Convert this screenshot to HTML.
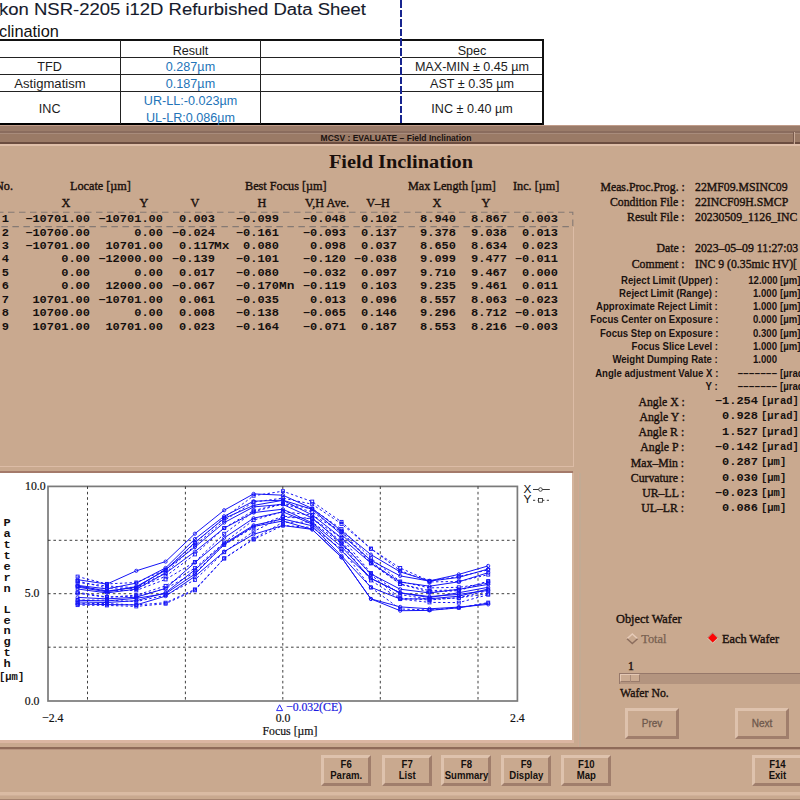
<!DOCTYPE html>
<html><head><meta charset="utf-8"><title>Field Inclination</title><style>
html,body{margin:0;padding:0;}
body{width:800px;height:800px;overflow:hidden;background:#c9a98f;position:relative;font-family:"Liberation Sans",sans-serif;}
#root{position:absolute;left:0;top:0;width:800px;height:800px;overflow:hidden;}
.r{position:absolute;}
.t{position:absolute;white-space:nowrap;margin:0;padding:0;}
.doc{font-family:"Liberation Sans",sans-serif;}
.sb{font-family:"Liberation Sans",sans-serif;font-weight:bold;}
.ss{font-family:"Liberation Sans",sans-serif;}
.sf{font-family:"Liberation Serif",serif;}
.sfb{font-family:"Liberation Serif",serif;font-weight:bold;}
.mb{font-family:"Liberation Mono",monospace;font-weight:bold;}
.btn{position:absolute;box-sizing:border-box;background:#c9a98f;border:3px solid;border-color:#dec2ad #a07e6c #a07e6c #dec2ad;display:flex;align-items:center;justify-content:center;}
.bi{font-family:"Liberation Sans",sans-serif;text-align:center;white-space:nowrap;}
</style></head><body><div id="root">
<div class="r" style="left:0px;top:0px;width:800px;height:125px;background:#fff;"></div>
<div class="t doc" style="top:-1.90px;height:22px;line-height:22px;left:-1.00px;transform:scaleX(1.07);transform-origin:left center;font-size:17.3px;color:#161a2c;-webkit-text-stroke:0.12px #161a2c;">kon NSR-2205 i12D Refurbished Data Sheet</div>
<div class="t doc" style="top:21.20px;height:20px;line-height:20px;left:-0.80px;transform:scaleX(0.95);transform-origin:left center;font-size:17.2px;color:#111;">clination</div>
<div class="r" style="left:0px;top:7px;width:0.8px;height:8.5px;background:#b08860;"></div>
<div class="r" style="left:0px;top:39px;width:543.5px;height:2px;background:#111;"></div>
<div class="r" style="left:0px;top:57px;width:543px;height:1.2px;background:#222;"></div>
<div class="r" style="left:0px;top:73.8px;width:543px;height:1.2px;background:#222;"></div>
<div class="r" style="left:0px;top:90.8px;width:543px;height:1.2px;background:#222;"></div>
<div class="r" style="left:0px;top:122.8px;width:543.5px;height:2px;background:#000;"></div>
<div class="r" style="left:119.5px;top:40px;width:1.3px;height:84px;background:#222;"></div>
<div class="r" style="left:259.5px;top:40px;width:1.3px;height:84px;background:#222;"></div>
<div class="r" style="left:541.7px;top:39px;width:2px;height:85.8px;background:#111;"></div>
<div class="r" style="left:400.3px;top:0;width:2px;height:123px;background:repeating-linear-gradient(to bottom,#17248f 0,#17248f 7.6px,#fff 7.6px,#fff 9.6px);"></div>
<div class="t doc" style="top:59.20px;height:16px;line-height:16px;left:-150.50px;width:400px;text-align:center;font-size:12.6px;color:#1c1c1c;">TFD</div>
<div class="t doc" style="top:76.10px;height:16px;line-height:16px;left:-150.40px;width:400px;text-align:center;transform:scaleX(1.04);transform-origin:center center;font-size:12.6px;color:#1c1c1c;">Astigmatism</div>
<div class="t doc" style="top:101.10px;height:16px;line-height:16px;left:-150.30px;width:400px;text-align:center;font-size:12.6px;color:#1c1c1c;">INC</div>
<div class="t doc" style="top:42.60px;height:16px;line-height:16px;left:-9.50px;width:400px;text-align:center;font-size:12.6px;color:#1c1c1c;">Result</div>
<div class="t doc" style="top:59.20px;height:16px;line-height:16px;left:-9.50px;width:400px;text-align:center;font-size:12.6px;color:#2374b8;">0.287µm</div>
<div class="t doc" style="top:76.10px;height:16px;line-height:16px;left:-9.50px;width:400px;text-align:center;font-size:12.6px;color:#2374b8;">0.187µm</div>
<div class="t doc" style="top:93.10px;height:16px;line-height:16px;left:-9.50px;width:400px;text-align:center;font-size:12.6px;color:#2374b8;">UR-LL:-0.023µm</div>
<div class="t doc" style="top:110.10px;height:16px;line-height:16px;left:-9.50px;width:400px;text-align:center;font-size:12.6px;color:#2374b8;">UL-LR:0.086µm</div>
<div class="t doc" style="top:42.60px;height:16px;line-height:16px;left:272.00px;width:400px;text-align:center;font-size:12.6px;color:#1c1c1c;">Spec</div>
<div class="t doc" style="top:59.20px;height:16px;line-height:16px;left:272.00px;width:400px;text-align:center;font-size:12.6px;color:#1c1c1c;">MAX-MIN ± 0.45 µm</div>
<div class="t doc" style="top:76.10px;height:16px;line-height:16px;left:272.00px;width:400px;text-align:center;font-size:12.6px;color:#1c1c1c;">AST ± 0.35 µm</div>
<div class="t doc" style="top:101.10px;height:16px;line-height:16px;left:272.00px;width:400px;text-align:center;font-size:12.6px;color:#1c1c1c;">INC ± 0.40 µm</div>
<div class="r" style="left:0px;top:125px;width:800px;height:675px;background:#c9a98f;"></div>
<div class="r" style="left:0px;top:125px;width:800px;height:1px;background:#c09c8a;"></div>
<div class="r" style="left:0px;top:126px;width:800px;height:5.5px;background:#9a7b69;"></div>
<div class="r" style="left:0px;top:131px;width:800px;height:2px;background:#8a6c5e;"></div>
<div class="r" style="left:0px;top:133px;width:800px;height:1px;background:#a88b7b;"></div>
<div class="r" style="left:0px;top:134px;width:800px;height:8px;background:#9a7a66;"></div>
<div class="r" style="left:0px;top:142px;width:800px;height:2px;background:#6b4d40;"></div>
<div class="r" style="left:0px;top:144px;width:800px;height:1.5px;background:#dfbfa9;"></div>
<div class="r" style="left:793.3px;top:132px;width:1px;height:11.5px;background:#7a5c4e;"></div>
<div class="r" style="left:794.3px;top:132px;width:1.2px;height:11.5px;background:#c9ab98;"></div>
<div class="t sb" style="top:131.60px;height:12px;line-height:12px;left:196.00px;width:400px;text-align:center;font-size:8.5px;color:#1a1210;">MCSV : EVALUATE – Field Inclination</div>
<div class="t sfb" style="top:150.50px;height:22px;line-height:22px;left:201.00px;width:400px;text-align:center;transform:scaleX(1.13);transform-origin:center center;font-size:18px;color:#1a100c;">Field Inclination</div>
<div class="t sf" style="top:177.90px;height:16px;line-height:16px;left:-4.60px;transform:scaleX(0.985);transform-origin:left center;font-size:12.4px;color:#1a100c;-webkit-text-stroke:0.38px #1a100c;">No.</div>
<div class="t sf" style="top:177.90px;height:16px;line-height:16px;left:70.00px;transform:scaleX(0.985);transform-origin:left center;font-size:12.4px;color:#1a100c;-webkit-text-stroke:0.38px #1a100c;">Locate [µm]</div>
<div class="t sf" style="top:177.90px;height:16px;line-height:16px;left:245.30px;transform:scaleX(0.985);transform-origin:left center;font-size:12.4px;color:#1a100c;-webkit-text-stroke:0.38px #1a100c;">Best Focus [µm]</div>
<div class="t sf" style="top:177.90px;height:16px;line-height:16px;left:408.20px;transform:scaleX(0.985);transform-origin:left center;font-size:12.4px;color:#1a100c;-webkit-text-stroke:0.38px #1a100c;">Max Length [µm]</div>
<div class="t sf" style="top:177.90px;height:16px;line-height:16px;left:512.50px;transform:scaleX(0.985);transform-origin:left center;font-size:12.4px;color:#1a100c;-webkit-text-stroke:0.38px #1a100c;">Inc. [µm]</div>
<div class="t sf" style="top:195.20px;height:16px;line-height:16px;left:-133.70px;width:400px;text-align:center;transform:scaleX(0.985);transform-origin:center center;font-size:12.4px;color:#1a100c;-webkit-text-stroke:0.38px #1a100c;">X</div>
<div class="t sf" style="top:195.20px;height:16px;line-height:16px;left:-56.50px;width:400px;text-align:center;transform:scaleX(0.985);transform-origin:center center;font-size:12.4px;color:#1a100c;-webkit-text-stroke:0.38px #1a100c;">Y</div>
<div class="t sf" style="top:195.20px;height:16px;line-height:16px;left:-5.50px;width:400px;text-align:center;transform:scaleX(0.985);transform-origin:center center;font-size:12.4px;color:#1a100c;-webkit-text-stroke:0.38px #1a100c;">V</div>
<div class="t sf" style="top:195.20px;height:16px;line-height:16px;left:61.50px;width:400px;text-align:center;transform:scaleX(0.985);transform-origin:center center;font-size:12.4px;color:#1a100c;-webkit-text-stroke:0.38px #1a100c;">H</div>
<div class="t sf" style="top:195.20px;height:16px;line-height:16px;left:126.50px;width:400px;text-align:center;transform:scaleX(0.985);transform-origin:center center;font-size:12.4px;color:#1a100c;-webkit-text-stroke:0.38px #1a100c;">V,H Ave.</div>
<div class="t sf" style="top:195.20px;height:16px;line-height:16px;left:177.50px;width:400px;text-align:center;transform:scaleX(0.985);transform-origin:center center;font-size:12.4px;color:#1a100c;-webkit-text-stroke:0.38px #1a100c;">V–H</div>
<div class="t sf" style="top:195.20px;height:16px;line-height:16px;left:236.50px;width:400px;text-align:center;transform:scaleX(0.985);transform-origin:center center;font-size:12.4px;color:#1a100c;-webkit-text-stroke:0.38px #1a100c;">X</div>
<div class="t sf" style="top:195.20px;height:16px;line-height:16px;left:286.30px;width:400px;text-align:center;transform:scaleX(0.985);transform-origin:center center;font-size:12.4px;color:#1a100c;-webkit-text-stroke:0.38px #1a100c;">Y</div>
<div class="t mb" style="right:791.10px;top:213.19px;line-height:13.42px;text-align:right;white-space:pre;transform:scaleX(1.2);transform-origin:right center;font-size:10px;color:#15100e;">1
2
3
4
5
6
7
8
9</div>
<div class="t mb" style="right:709.70px;top:213.19px;line-height:13.42px;text-align:right;white-space:pre;transform:scaleX(1.2);transform-origin:right center;font-size:10px;color:#15100e;">−10701.00
−10700.00
−10701.00
0.00
0.00
0.00
10701.00
10700.00
10701.00</div>
<div class="t mb" style="right:636.70px;top:213.19px;line-height:13.42px;text-align:right;white-space:pre;transform:scaleX(1.2);transform-origin:right center;font-size:10px;color:#15100e;">−10701.00
0.00
10701.00
−12000.00
0.00
12000.00
−10701.00
0.00
10701.00</div>
<div class="t mb" style="right:585.20px;top:213.19px;line-height:13.42px;text-align:right;white-space:pre;transform:scaleX(1.2);transform-origin:right center;font-size:10px;color:#15100e;">0.003
−0.024
0.117
−0.139
0.017
−0.067
0.061
0.008
0.023</div>
<div class="t mb" style="right:520.70px;top:213.19px;line-height:13.42px;text-align:right;white-space:pre;transform:scaleX(1.2);transform-origin:right center;font-size:10px;color:#15100e;">−0.099
−0.161
0.080
−0.101
−0.080
−0.170
−0.035
−0.138
−0.164</div>
<div class="t mb" style="right:454.20px;top:213.19px;line-height:13.42px;text-align:right;white-space:pre;transform:scaleX(1.2);transform-origin:right center;font-size:10px;color:#15100e;">−0.048
−0.093
0.098
−0.120
−0.032
−0.119
0.013
−0.065
−0.071</div>
<div class="t mb" style="right:403.20px;top:213.19px;line-height:13.42px;text-align:right;white-space:pre;transform:scaleX(1.2);transform-origin:right center;font-size:10px;color:#15100e;">0.102
0.137
0.037
−0.038
0.097
0.103
0.096
0.146
0.187</div>
<div class="t mb" style="right:344.20px;top:213.19px;line-height:13.42px;text-align:right;white-space:pre;transform:scaleX(1.2);transform-origin:right center;font-size:10px;color:#15100e;">8.940
9.378
8.650
9.099
9.710
9.235
8.557
9.296
8.553</div>
<div class="t mb" style="right:293.10px;top:213.19px;line-height:13.42px;text-align:right;white-space:pre;transform:scaleX(1.2);transform-origin:right center;font-size:10px;color:#15100e;">8.867
9.038
8.634
9.477
9.467
9.461
8.063
8.712
8.216</div>
<div class="t mb" style="right:241.70px;top:213.19px;line-height:13.42px;text-align:right;white-space:pre;transform:scaleX(1.2);transform-origin:right center;font-size:10px;color:#15100e;">0.003
0.013
0.023
−0.011
0.000
0.011
−0.023
−0.013
−0.003</div>
<div class="t mb" style="top:240.74px;height:12px;line-height:12px;left:214.30px;transform:scaleX(1.28);transform-origin:left center;font-size:10px;color:#15100e;">Mx</div>
<div class="t mb" style="top:281.00px;height:12px;line-height:12px;left:278.80px;transform:scaleX(1.28);transform-origin:left center;font-size:10px;color:#15100e;">Mn</div>
<svg class="r" style="left:0;top:208px;width:580px;height:24px" width="580" height="24"><path d="M-3 4.3H572.8V18.6H-3" fill="none" stroke="#857a74" stroke-width="1.1" stroke-dasharray="6.5 4.5"/></svg>
<div class="r" style="left:572.5px;top:227px;width:1.5px;height:240px;background:#dcbca6;"></div>
<div class="r" style="left:0px;top:465.5px;width:574px;height:1.5px;background:#dcbca6;"></div>
<div class="t sf" style="top:179.00px;height:16px;line-height:16px;right:115.50px;transform:scaleX(0.95);transform-origin:right center;font-size:12.4px;color:#1a100c;-webkit-text-stroke:0.38px #1a100c;">Meas.Proc.Prog. :</div>
<div class="t sf" style="top:179.00px;height:16px;line-height:16px;left:695.00px;transform:scaleX(0.95);transform-origin:left center;font-size:12.4px;color:#1a100c;-webkit-text-stroke:0.38px #1a100c;white-space:pre;">22MF09.MSINC09</div>
<div class="t sf" style="top:194.20px;height:16px;line-height:16px;right:115.50px;transform:scaleX(0.95);transform-origin:right center;font-size:12.4px;color:#1a100c;-webkit-text-stroke:0.38px #1a100c;">Condition File :</div>
<div class="t sf" style="top:194.20px;height:16px;line-height:16px;left:695.00px;transform:scaleX(0.95);transform-origin:left center;font-size:12.4px;color:#1a100c;-webkit-text-stroke:0.38px #1a100c;white-space:pre;">22INCF09H.SMCP</div>
<div class="t sf" style="top:209.40px;height:16px;line-height:16px;right:115.50px;transform:scaleX(0.95);transform-origin:right center;font-size:12.4px;color:#1a100c;-webkit-text-stroke:0.38px #1a100c;">Result File :</div>
<div class="t sf" style="top:209.40px;height:16px;line-height:16px;left:695.00px;transform:scaleX(0.95);transform-origin:left center;font-size:12.4px;color:#1a100c;-webkit-text-stroke:0.38px #1a100c;white-space:pre;">20230509_1126_INC</div>
<div class="t sf" style="top:240.30px;height:16px;line-height:16px;right:115.50px;transform:scaleX(0.95);transform-origin:right center;font-size:12.4px;color:#1a100c;-webkit-text-stroke:0.38px #1a100c;">Date :</div>
<div class="t sf" style="top:240.30px;height:16px;line-height:16px;left:695.00px;transform:scaleX(0.95);transform-origin:left center;font-size:12.4px;color:#1a100c;-webkit-text-stroke:0.38px #1a100c;white-space:pre;">2023–05–09 11:27:03</div>
<div class="t sf" style="top:255.50px;height:16px;line-height:16px;right:115.50px;transform:scaleX(0.95);transform-origin:right center;font-size:12.4px;color:#1a100c;-webkit-text-stroke:0.38px #1a100c;">Comment :</div>
<div class="t sf" style="top:255.50px;height:16px;line-height:16px;left:695.00px;transform:scaleX(0.95);transform-origin:left center;font-size:12.4px;color:#1a100c;-webkit-text-stroke:0.38px #1a100c;white-space:pre;">INC 9 (0.35mic HV)[</div>
<div class="t sb" style="top:273.50px;height:13px;line-height:13px;right:82.00px;transform:scaleX(0.96);transform-origin:right center;font-size:10px;color:#1a1210;">Reject Limit (Upper) :</div>
<div class="t sb" style="top:273.50px;height:13px;line-height:13px;right:22.80px;transform:scaleX(0.96);transform-origin:right center;font-size:10px;color:#1a1210;">12.000</div>
<div class="t sb" style="top:273.50px;height:13px;line-height:13px;left:780.30px;transform:scaleX(0.96);transform-origin:left center;font-size:10px;color:#1a1210;white-space:pre;">[µm]</div>
<div class="t sb" style="top:286.80px;height:13px;line-height:13px;right:82.00px;transform:scaleX(0.96);transform-origin:right center;font-size:10px;color:#1a1210;">Reject Limit (Range) :</div>
<div class="t sb" style="top:286.80px;height:13px;line-height:13px;right:22.80px;transform:scaleX(0.96);transform-origin:right center;font-size:10px;color:#1a1210;">1.000</div>
<div class="t sb" style="top:286.80px;height:13px;line-height:13px;left:780.30px;transform:scaleX(0.96);transform-origin:left center;font-size:10px;color:#1a1210;white-space:pre;">[µm]</div>
<div class="t sb" style="top:300.10px;height:13px;line-height:13px;right:82.00px;transform:scaleX(0.96);transform-origin:right center;font-size:10px;color:#1a1210;">Approximate Reject Limit :</div>
<div class="t sb" style="top:300.10px;height:13px;line-height:13px;right:22.80px;transform:scaleX(0.96);transform-origin:right center;font-size:10px;color:#1a1210;">1.000</div>
<div class="t sb" style="top:300.10px;height:13px;line-height:13px;left:780.30px;transform:scaleX(0.96);transform-origin:left center;font-size:10px;color:#1a1210;white-space:pre;">[µm]</div>
<div class="t sb" style="top:313.40px;height:13px;line-height:13px;right:82.00px;transform:scaleX(0.96);transform-origin:right center;font-size:10px;color:#1a1210;">Focus Center on Exposure :</div>
<div class="t sb" style="top:313.40px;height:13px;line-height:13px;right:22.80px;transform:scaleX(0.96);transform-origin:right center;font-size:10px;color:#1a1210;">0.000</div>
<div class="t sb" style="top:313.40px;height:13px;line-height:13px;left:780.30px;transform:scaleX(0.96);transform-origin:left center;font-size:10px;color:#1a1210;white-space:pre;">[µm]</div>
<div class="t sb" style="top:326.70px;height:13px;line-height:13px;right:82.00px;transform:scaleX(0.96);transform-origin:right center;font-size:10px;color:#1a1210;">Focus Step on Exposure :</div>
<div class="t sb" style="top:326.70px;height:13px;line-height:13px;right:22.80px;transform:scaleX(0.96);transform-origin:right center;font-size:10px;color:#1a1210;">0.300</div>
<div class="t sb" style="top:326.70px;height:13px;line-height:13px;left:780.30px;transform:scaleX(0.96);transform-origin:left center;font-size:10px;color:#1a1210;white-space:pre;">[µm]</div>
<div class="t sb" style="top:340.00px;height:13px;line-height:13px;right:82.00px;transform:scaleX(0.96);transform-origin:right center;font-size:10px;color:#1a1210;">Focus Slice Level :</div>
<div class="t sb" style="top:340.00px;height:13px;line-height:13px;right:22.80px;transform:scaleX(0.96);transform-origin:right center;font-size:10px;color:#1a1210;">1.000</div>
<div class="t sb" style="top:340.00px;height:13px;line-height:13px;left:780.30px;transform:scaleX(0.96);transform-origin:left center;font-size:10px;color:#1a1210;white-space:pre;">[µm]</div>
<div class="t sb" style="top:353.30px;height:13px;line-height:13px;right:82.00px;transform:scaleX(0.96);transform-origin:right center;font-size:10px;color:#1a1210;">Weight Dumping Rate :</div>
<div class="t sb" style="top:353.30px;height:13px;line-height:13px;right:22.80px;transform:scaleX(0.96);transform-origin:right center;font-size:10px;color:#1a1210;">1.000</div>
<div class="t sb" style="top:366.60px;height:13px;line-height:13px;right:82.00px;transform:scaleX(0.96);transform-origin:right center;font-size:10px;color:#1a1210;">Angle adjustment Value X :</div>
<div class="t sb" style="top:366.60px;height:13px;line-height:13px;right:22.80px;transform:scaleX(0.96);transform-origin:right center;font-size:10px;color:#1a1210;letter-spacing:0.08px;">−−−−−−−</div>
<div class="t sb" style="top:366.60px;height:13px;line-height:13px;left:780.30px;transform:scaleX(0.96);transform-origin:left center;font-size:10px;color:#1a1210;white-space:pre;">[µrad]</div>
<div class="t sb" style="top:379.90px;height:13px;line-height:13px;right:82.00px;transform:scaleX(0.96);transform-origin:right center;font-size:10px;color:#1a1210;">Y :</div>
<div class="t sb" style="top:379.90px;height:13px;line-height:13px;right:22.80px;transform:scaleX(0.96);transform-origin:right center;font-size:10px;color:#1a1210;letter-spacing:0.08px;">−−−−−−−</div>
<div class="t sb" style="top:379.90px;height:13px;line-height:13px;left:780.30px;transform:scaleX(0.96);transform-origin:left center;font-size:10px;color:#1a1210;white-space:pre;">[µrad]</div>
<div class="t sf" style="top:393.50px;height:16px;line-height:16px;right:115.50px;transform:scaleX(0.95);transform-origin:right center;font-size:12.4px;color:#1a100c;-webkit-text-stroke:0.38px #1a100c;">Angle X :</div>
<div class="t mb" style="top:394.20px;height:16px;line-height:16px;right:42.40px;transform:scaleX(1.2);transform-origin:right center;font-size:10px;color:#15100e;white-space:pre;">−1.254</div>
<div class="t mb" style="top:394.20px;height:16px;line-height:16px;left:761.30px;transform:scaleX(1.05);transform-origin:left center;font-size:10px;color:#15100e;white-space:pre;">[µrad]</div>
<div class="t sf" style="top:408.78px;height:16px;line-height:16px;right:115.50px;transform:scaleX(0.95);transform-origin:right center;font-size:12.4px;color:#1a100c;-webkit-text-stroke:0.38px #1a100c;">Angle Y :</div>
<div class="t mb" style="top:409.48px;height:16px;line-height:16px;right:42.40px;transform:scaleX(1.2);transform-origin:right center;font-size:10px;color:#15100e;white-space:pre;">0.928</div>
<div class="t mb" style="top:409.48px;height:16px;line-height:16px;left:761.30px;transform:scaleX(1.05);transform-origin:left center;font-size:10px;color:#15100e;white-space:pre;">[µrad]</div>
<div class="t sf" style="top:424.06px;height:16px;line-height:16px;right:115.50px;transform:scaleX(0.95);transform-origin:right center;font-size:12.4px;color:#1a100c;-webkit-text-stroke:0.38px #1a100c;">Angle R :</div>
<div class="t mb" style="top:424.76px;height:16px;line-height:16px;right:42.40px;transform:scaleX(1.2);transform-origin:right center;font-size:10px;color:#15100e;white-space:pre;">1.527</div>
<div class="t mb" style="top:424.76px;height:16px;line-height:16px;left:761.30px;transform:scaleX(1.05);transform-origin:left center;font-size:10px;color:#15100e;white-space:pre;">[µrad]</div>
<div class="t sf" style="top:439.34px;height:16px;line-height:16px;right:115.50px;transform:scaleX(0.95);transform-origin:right center;font-size:12.4px;color:#1a100c;-webkit-text-stroke:0.38px #1a100c;">Angle P :</div>
<div class="t mb" style="top:440.04px;height:16px;line-height:16px;right:42.40px;transform:scaleX(1.2);transform-origin:right center;font-size:10px;color:#15100e;white-space:pre;">−0.142</div>
<div class="t mb" style="top:440.04px;height:16px;line-height:16px;left:761.30px;transform:scaleX(1.05);transform-origin:left center;font-size:10px;color:#15100e;white-space:pre;">[µrad]</div>
<div class="t sf" style="top:454.62px;height:16px;line-height:16px;right:115.50px;transform:scaleX(0.95);transform-origin:right center;font-size:12.4px;color:#1a100c;-webkit-text-stroke:0.38px #1a100c;">Max–Min :</div>
<div class="t mb" style="top:455.32px;height:16px;line-height:16px;right:42.40px;transform:scaleX(1.2);transform-origin:right center;font-size:10px;color:#15100e;white-space:pre;">0.287</div>
<div class="t mb" style="top:455.32px;height:16px;line-height:16px;left:761.30px;transform:scaleX(1.05);transform-origin:left center;font-size:10px;color:#15100e;white-space:pre;">[µm]</div>
<div class="t sf" style="top:469.90px;height:16px;line-height:16px;right:115.50px;transform:scaleX(0.95);transform-origin:right center;font-size:12.4px;color:#1a100c;-webkit-text-stroke:0.38px #1a100c;">Curvature :</div>
<div class="t mb" style="top:470.60px;height:16px;line-height:16px;right:42.40px;transform:scaleX(1.2);transform-origin:right center;font-size:10px;color:#15100e;white-space:pre;">0.030</div>
<div class="t mb" style="top:470.60px;height:16px;line-height:16px;left:761.30px;transform:scaleX(1.05);transform-origin:left center;font-size:10px;color:#15100e;white-space:pre;">[µm]</div>
<div class="t sf" style="top:485.18px;height:16px;line-height:16px;right:115.50px;transform:scaleX(0.95);transform-origin:right center;font-size:12.4px;color:#1a100c;-webkit-text-stroke:0.38px #1a100c;">UR–LL :</div>
<div class="t mb" style="top:485.88px;height:16px;line-height:16px;right:42.40px;transform:scaleX(1.2);transform-origin:right center;font-size:10px;color:#15100e;white-space:pre;">−0.023</div>
<div class="t mb" style="top:485.88px;height:16px;line-height:16px;left:761.30px;transform:scaleX(1.05);transform-origin:left center;font-size:10px;color:#15100e;white-space:pre;">[µm]</div>
<div class="t sf" style="top:500.46px;height:16px;line-height:16px;right:115.50px;transform:scaleX(0.95);transform-origin:right center;font-size:12.4px;color:#1a100c;-webkit-text-stroke:0.38px #1a100c;">UL–LR :</div>
<div class="t mb" style="top:501.16px;height:16px;line-height:16px;right:42.40px;transform:scaleX(1.2);transform-origin:right center;font-size:10px;color:#15100e;white-space:pre;">0.086</div>
<div class="t mb" style="top:501.16px;height:16px;line-height:16px;left:761.30px;transform:scaleX(1.05);transform-origin:left center;font-size:10px;color:#15100e;white-space:pre;">[µm]</div>
<div class="r" style="left:0px;top:470.8px;width:573px;height:1.8px;background:#a47a6a;"></div>
<div class="r" style="left:0px;top:472.5px;width:572.3px;height:267.8px;background:#fff;"></div>
<div class="r" style="left:572.3px;top:472.5px;width:2px;height:268px;background:#d3b39c;"></div>
<div class="r" style="left:577.8px;top:472.5px;width:1.2px;height:274px;background:#cfa791;"></div>
<div class="r" style="left:579.2px;top:472.5px;width:1.5px;height:274px;background:#c2ab94;"></div>
<div class="r" style="left:0px;top:740.3px;width:573.5px;height:2.6px;background:#dbb6a2;"></div>
<svg class="r" style="left:0;top:0;width:800px;height:800px" width="800" height="800" viewBox="0 0 800 800"><rect x="48.0" y="486.4" width="469.4" height="214.60000000000002" fill="none" stroke="#7a7a7a" stroke-width="1.7"/><line x1="87.5" y1="486.4" x2="87.5" y2="701.0" stroke="#2a2a2a" stroke-width="0.9" stroke-dasharray="2.6 2.8"/><line x1="185.4" y1="486.4" x2="185.4" y2="701.0" stroke="#2a2a2a" stroke-width="0.9" stroke-dasharray="2.6 2.8"/><line x1="282.8" y1="486.4" x2="282.8" y2="701.0" stroke="#2a2a2a" stroke-width="0.9" stroke-dasharray="2.6 2.8"/><line x1="380.3" y1="486.4" x2="380.3" y2="701.0" stroke="#2a2a2a" stroke-width="0.9" stroke-dasharray="2.6 2.8"/><line x1="478.0" y1="486.4" x2="478.0" y2="701.0" stroke="#2a2a2a" stroke-width="0.9" stroke-dasharray="2.6 2.8"/><line x1="48.0" y1="540.3" x2="517.4" y2="540.3" stroke="#2a2a2a" stroke-width="0.9" stroke-dasharray="2.6 2.8"/><line x1="48.0" y1="593.7" x2="517.4" y2="593.7" stroke="#2a2a2a" stroke-width="0.9" stroke-dasharray="2.6 2.8"/><line x1="48.0" y1="647.2" x2="517.4" y2="647.2" stroke="#2a2a2a" stroke-width="0.9" stroke-dasharray="2.6 2.8"/><path d="M77.6 600.3 L106.9 600.9 L136.3 598.3 L165.6 593.6 L194.9 574.1 L224.2 544.4 L253.6 526.4 L282.9 521.0 L312.2 529.4 L341.5 557.3 L370.9 598.9 L400.2 606.9 L429.5 608.8 L458.8 607.1 L488.2 604.4" fill="none" stroke="#1414f6" stroke-width="1"/><path d="M77.6 592.3 L106.9 597.0 L136.3 596.1 L165.6 588.6 L194.9 572.6 L224.2 544.9 L253.6 527.4 L282.9 516.2 L312.2 518.5 L341.5 537.9 L370.9 573.0 L400.2 594.5 L429.5 599.3 L458.8 597.9 L488.2 593.6" fill="none" stroke="#1414f6" stroke-width="1" stroke-dasharray="2.4 2.4"/><path d="M77.6 587.1 L106.9 591.8 L136.3 586.6 L165.6 570.2 L194.9 542.4 L224.2 518.4 L253.6 505.4 L282.9 500.3 L312.2 515.0 L341.5 537.8 L370.9 563.1 L400.2 582.1 L429.5 586.2 L458.8 581.8 L488.2 572.7" fill="none" stroke="#1414f6" stroke-width="1"/><path d="M77.6 600.0 L106.9 600.2 L136.3 601.6 L165.6 595.2 L194.9 579.9 L224.2 552.2 L253.6 531.4 L282.9 517.0 L312.2 518.8 L341.5 541.5 L370.9 574.8 L400.2 598.2 L429.5 600.0 L458.8 597.7 L488.2 590.5" fill="none" stroke="#1414f6" stroke-width="1" stroke-dasharray="2.4 2.4"/><path d="M77.6 585.4 L106.9 588.9 L136.3 583.1 L165.6 567.9 L194.9 539.0 L224.2 516.2 L253.6 501.2 L282.9 500.2 L312.2 509.3 L341.5 534.6 L370.9 560.4 L400.2 575.9 L429.5 581.1 L458.8 577.4 L488.2 569.0" fill="none" stroke="#1414f6" stroke-width="1"/><path d="M77.6 576.6 L106.9 583.9 L136.3 582.5 L165.6 569.7 L194.9 543.0 L224.2 517.8 L253.6 495.7 L282.9 491.2 L312.2 501.6 L341.5 521.9 L370.9 548.7 L400.2 568.0 L429.5 580.9 L458.8 576.5 L488.2 569.9" fill="none" stroke="#1414f6" stroke-width="1" stroke-dasharray="2.4 2.4"/><path d="M77.6 589.0 L106.9 592.9 L136.3 589.1 L165.6 573.2 L194.9 551.6 L224.2 528.1 L253.6 512.6 L282.9 509.2 L312.2 522.9 L341.5 546.6 L370.9 578.4 L400.2 592.8 L429.5 596.6 L458.8 594.4 L488.2 590.4" fill="none" stroke="#1414f6" stroke-width="1"/><path d="M77.6 581.0 L106.9 588.0 L136.3 588.4 L165.6 576.3 L194.9 554.4 L224.2 528.0 L253.6 510.6 L282.9 503.5 L312.2 508.8 L341.5 529.1 L370.9 558.2 L400.2 581.5 L429.5 587.9 L458.8 587.3 L488.2 583.2" fill="none" stroke="#1414f6" stroke-width="1" stroke-dasharray="2.4 2.4"/><path d="M77.6 604.0 L106.9 604.6 L136.3 604.9 L165.6 596.1 L194.9 576.4 L224.2 551.6 L253.6 534.3 L282.9 525.5 L312.2 529.4 L341.5 557.3 L370.9 598.9 L400.2 610.7 L429.5 610.4 L458.8 607.8 L488.2 603.2" fill="none" stroke="#1414f6" stroke-width="1"/><path d="M77.6 582.5 L106.9 586.0 L136.3 587.6 L165.6 572.8 L194.9 545.4 L224.2 520.5 L253.6 502.1 L282.9 498.1 L312.2 504.2 L341.5 523.9 L370.9 548.7 L400.2 570.6 L429.5 581.9 L458.8 581.5 L488.2 574.6" fill="none" stroke="#1414f6" stroke-width="1" stroke-dasharray="2.4 2.4"/><path d="M77.6 579.7 L106.9 584.1 L136.3 570.8 L165.6 561.6 L194.9 533.7 L224.2 510.2 L253.6 493.9 L282.9 495.2 L312.2 508.5 L341.5 530.7 L370.9 554.6 L400.2 571.9 L429.5 580.9 L458.8 574.4 L488.2 565.9" fill="none" stroke="#1414f6" stroke-width="1"/><path d="M77.6 603.3 L106.9 603.6 L136.3 604.9 L165.6 602.7 L194.9 589.4 L224.2 558.4 L253.6 538.7 L282.9 522.3 L312.2 522.1 L341.5 543.5 L370.9 580.4 L400.2 599.1 L429.5 602.4 L458.8 602.6 L488.2 594.7" fill="none" stroke="#1414f6" stroke-width="1" stroke-dasharray="2.4 2.4"/><path d="M77.6 597.4 L106.9 598.9 L136.3 597.2 L165.6 588.4 L194.9 562.6 L224.2 537.9 L253.6 518.2 L282.9 511.8 L312.2 524.1 L341.5 550.9 L370.9 578.3 L400.2 592.9 L429.5 597.5 L458.8 592.7 L488.2 587.3" fill="none" stroke="#1414f6" stroke-width="1"/><path d="M77.6 593.3 L106.9 597.4 L136.3 595.2 L165.6 585.9 L194.9 568.1 L224.2 542.5 L253.6 520.1 L282.9 511.6 L312.2 515.2 L341.5 531.4 L370.9 563.4 L400.2 584.0 L429.5 590.6 L458.8 589.9 L488.2 581.1" fill="none" stroke="#1414f6" stroke-width="1" stroke-dasharray="2.4 2.4"/><path d="M77.6 602.0 L106.9 602.5 L136.3 600.7 L165.6 592.7 L194.9 569.8 L224.2 543.6 L253.6 525.3 L282.9 518.9 L312.2 525.8 L341.5 555.8 L370.9 587.3 L400.2 599.0 L429.5 598.8 L458.8 596.2 L488.2 589.0" fill="none" stroke="#1414f6" stroke-width="1"/><path d="M77.6 605.1 L106.9 605.4 L136.3 606.4 L165.6 603.7 L194.9 590.3 L224.2 558.4 L253.6 539.5 L282.9 525.5 L312.2 527.5 L341.5 548.9 L370.9 587.5 L400.2 609.0 L429.5 610.0 L458.8 607.7 L488.2 602.6" fill="none" stroke="#1414f6" stroke-width="1" stroke-dasharray="2.4 2.4"/><path d="M77.6 586.0 L106.9 591.0 L136.3 587.4 L165.6 569.6 L194.9 547.1 L224.2 522.6 L253.6 506.9 L282.9 504.4 L312.2 518.0 L341.5 543.2 L370.9 573.9 L400.2 589.2 L429.5 592.9 L458.8 589.3 L488.2 584.4" fill="none" stroke="#1414f6" stroke-width="1"/><path d="M77.6 586.2 L106.9 590.8 L136.3 590.4 L165.6 579.4 L194.9 562.0 L224.2 533.8 L253.6 511.6 L282.9 504.1 L312.2 511.8 L341.5 532.0 L370.9 561.3 L400.2 584.1 L429.5 592.1 L458.8 590.6 L488.2 581.7" fill="none" stroke="#1414f6" stroke-width="1" stroke-dasharray="2.4 2.4"/><circle cx="77.6" cy="600.3" r="1.6" fill="none" stroke="#1414f6" stroke-width="0.9"/><circle cx="106.9" cy="600.9" r="1.6" fill="none" stroke="#1414f6" stroke-width="0.9"/><circle cx="136.3" cy="598.3" r="1.6" fill="none" stroke="#1414f6" stroke-width="0.9"/><circle cx="165.6" cy="593.6" r="1.6" fill="none" stroke="#1414f6" stroke-width="0.9"/><circle cx="194.9" cy="574.1" r="1.6" fill="none" stroke="#1414f6" stroke-width="0.9"/><circle cx="224.2" cy="544.4" r="1.6" fill="none" stroke="#1414f6" stroke-width="0.9"/><circle cx="253.6" cy="526.4" r="1.6" fill="none" stroke="#1414f6" stroke-width="0.9"/><circle cx="282.9" cy="521.0" r="1.6" fill="none" stroke="#1414f6" stroke-width="0.9"/><circle cx="312.2" cy="529.4" r="1.6" fill="none" stroke="#1414f6" stroke-width="0.9"/><circle cx="341.5" cy="557.3" r="1.6" fill="none" stroke="#1414f6" stroke-width="0.9"/><circle cx="370.9" cy="598.9" r="1.6" fill="none" stroke="#1414f6" stroke-width="0.9"/><circle cx="400.2" cy="606.9" r="1.6" fill="none" stroke="#1414f6" stroke-width="0.9"/><circle cx="429.5" cy="608.8" r="1.6" fill="none" stroke="#1414f6" stroke-width="0.9"/><circle cx="458.8" cy="607.1" r="1.6" fill="none" stroke="#1414f6" stroke-width="0.9"/><circle cx="488.2" cy="604.4" r="1.6" fill="none" stroke="#1414f6" stroke-width="0.9"/><rect x="76.1" y="590.8" width="3" height="3" fill="none" stroke="#1414f6" stroke-width="0.9"/><rect x="105.4" y="595.5" width="3" height="3" fill="none" stroke="#1414f6" stroke-width="0.9"/><rect x="134.8" y="594.6" width="3" height="3" fill="none" stroke="#1414f6" stroke-width="0.9"/><rect x="164.1" y="587.1" width="3" height="3" fill="none" stroke="#1414f6" stroke-width="0.9"/><rect x="193.4" y="571.1" width="3" height="3" fill="none" stroke="#1414f6" stroke-width="0.9"/><rect x="222.7" y="543.4" width="3" height="3" fill="none" stroke="#1414f6" stroke-width="0.9"/><rect x="252.1" y="525.9" width="3" height="3" fill="none" stroke="#1414f6" stroke-width="0.9"/><rect x="281.4" y="514.7" width="3" height="3" fill="none" stroke="#1414f6" stroke-width="0.9"/><rect x="310.7" y="517.0" width="3" height="3" fill="none" stroke="#1414f6" stroke-width="0.9"/><rect x="340.0" y="536.4" width="3" height="3" fill="none" stroke="#1414f6" stroke-width="0.9"/><rect x="369.4" y="571.5" width="3" height="3" fill="none" stroke="#1414f6" stroke-width="0.9"/><rect x="398.7" y="593.0" width="3" height="3" fill="none" stroke="#1414f6" stroke-width="0.9"/><rect x="428.0" y="597.8" width="3" height="3" fill="none" stroke="#1414f6" stroke-width="0.9"/><rect x="457.3" y="596.4" width="3" height="3" fill="none" stroke="#1414f6" stroke-width="0.9"/><rect x="486.7" y="592.1" width="3" height="3" fill="none" stroke="#1414f6" stroke-width="0.9"/><circle cx="77.6" cy="587.1" r="1.6" fill="none" stroke="#1414f6" stroke-width="0.9"/><circle cx="106.9" cy="591.8" r="1.6" fill="none" stroke="#1414f6" stroke-width="0.9"/><circle cx="136.3" cy="586.6" r="1.6" fill="none" stroke="#1414f6" stroke-width="0.9"/><circle cx="165.6" cy="570.2" r="1.6" fill="none" stroke="#1414f6" stroke-width="0.9"/><circle cx="194.9" cy="542.4" r="1.6" fill="none" stroke="#1414f6" stroke-width="0.9"/><circle cx="224.2" cy="518.4" r="1.6" fill="none" stroke="#1414f6" stroke-width="0.9"/><circle cx="253.6" cy="505.4" r="1.6" fill="none" stroke="#1414f6" stroke-width="0.9"/><circle cx="282.9" cy="500.3" r="1.6" fill="none" stroke="#1414f6" stroke-width="0.9"/><circle cx="312.2" cy="515.0" r="1.6" fill="none" stroke="#1414f6" stroke-width="0.9"/><circle cx="341.5" cy="537.8" r="1.6" fill="none" stroke="#1414f6" stroke-width="0.9"/><circle cx="370.9" cy="563.1" r="1.6" fill="none" stroke="#1414f6" stroke-width="0.9"/><circle cx="400.2" cy="582.1" r="1.6" fill="none" stroke="#1414f6" stroke-width="0.9"/><circle cx="429.5" cy="586.2" r="1.6" fill="none" stroke="#1414f6" stroke-width="0.9"/><circle cx="458.8" cy="581.8" r="1.6" fill="none" stroke="#1414f6" stroke-width="0.9"/><circle cx="488.2" cy="572.7" r="1.6" fill="none" stroke="#1414f6" stroke-width="0.9"/><rect x="76.1" y="598.5" width="3" height="3" fill="none" stroke="#1414f6" stroke-width="0.9"/><rect x="105.4" y="598.7" width="3" height="3" fill="none" stroke="#1414f6" stroke-width="0.9"/><rect x="134.8" y="600.1" width="3" height="3" fill="none" stroke="#1414f6" stroke-width="0.9"/><rect x="164.1" y="593.7" width="3" height="3" fill="none" stroke="#1414f6" stroke-width="0.9"/><rect x="193.4" y="578.4" width="3" height="3" fill="none" stroke="#1414f6" stroke-width="0.9"/><rect x="222.7" y="550.7" width="3" height="3" fill="none" stroke="#1414f6" stroke-width="0.9"/><rect x="252.1" y="529.9" width="3" height="3" fill="none" stroke="#1414f6" stroke-width="0.9"/><rect x="281.4" y="515.5" width="3" height="3" fill="none" stroke="#1414f6" stroke-width="0.9"/><rect x="310.7" y="517.3" width="3" height="3" fill="none" stroke="#1414f6" stroke-width="0.9"/><rect x="340.0" y="540.0" width="3" height="3" fill="none" stroke="#1414f6" stroke-width="0.9"/><rect x="369.4" y="573.3" width="3" height="3" fill="none" stroke="#1414f6" stroke-width="0.9"/><rect x="398.7" y="596.7" width="3" height="3" fill="none" stroke="#1414f6" stroke-width="0.9"/><rect x="428.0" y="598.5" width="3" height="3" fill="none" stroke="#1414f6" stroke-width="0.9"/><rect x="457.3" y="596.2" width="3" height="3" fill="none" stroke="#1414f6" stroke-width="0.9"/><rect x="486.7" y="589.0" width="3" height="3" fill="none" stroke="#1414f6" stroke-width="0.9"/><circle cx="77.6" cy="585.4" r="1.6" fill="none" stroke="#1414f6" stroke-width="0.9"/><circle cx="106.9" cy="588.9" r="1.6" fill="none" stroke="#1414f6" stroke-width="0.9"/><circle cx="136.3" cy="583.1" r="1.6" fill="none" stroke="#1414f6" stroke-width="0.9"/><circle cx="165.6" cy="567.9" r="1.6" fill="none" stroke="#1414f6" stroke-width="0.9"/><circle cx="194.9" cy="539.0" r="1.6" fill="none" stroke="#1414f6" stroke-width="0.9"/><circle cx="224.2" cy="516.2" r="1.6" fill="none" stroke="#1414f6" stroke-width="0.9"/><circle cx="253.6" cy="501.2" r="1.6" fill="none" stroke="#1414f6" stroke-width="0.9"/><circle cx="282.9" cy="500.2" r="1.6" fill="none" stroke="#1414f6" stroke-width="0.9"/><circle cx="312.2" cy="509.3" r="1.6" fill="none" stroke="#1414f6" stroke-width="0.9"/><circle cx="341.5" cy="534.6" r="1.6" fill="none" stroke="#1414f6" stroke-width="0.9"/><circle cx="370.9" cy="560.4" r="1.6" fill="none" stroke="#1414f6" stroke-width="0.9"/><circle cx="400.2" cy="575.9" r="1.6" fill="none" stroke="#1414f6" stroke-width="0.9"/><circle cx="429.5" cy="581.1" r="1.6" fill="none" stroke="#1414f6" stroke-width="0.9"/><circle cx="458.8" cy="577.4" r="1.6" fill="none" stroke="#1414f6" stroke-width="0.9"/><circle cx="488.2" cy="569.0" r="1.6" fill="none" stroke="#1414f6" stroke-width="0.9"/><rect x="76.1" y="575.1" width="3" height="3" fill="none" stroke="#1414f6" stroke-width="0.9"/><rect x="105.4" y="582.4" width="3" height="3" fill="none" stroke="#1414f6" stroke-width="0.9"/><rect x="134.8" y="581.0" width="3" height="3" fill="none" stroke="#1414f6" stroke-width="0.9"/><rect x="164.1" y="568.2" width="3" height="3" fill="none" stroke="#1414f6" stroke-width="0.9"/><rect x="193.4" y="541.5" width="3" height="3" fill="none" stroke="#1414f6" stroke-width="0.9"/><rect x="222.7" y="516.3" width="3" height="3" fill="none" stroke="#1414f6" stroke-width="0.9"/><rect x="252.1" y="494.2" width="3" height="3" fill="none" stroke="#1414f6" stroke-width="0.9"/><rect x="281.4" y="489.7" width="3" height="3" fill="none" stroke="#1414f6" stroke-width="0.9"/><rect x="310.7" y="500.1" width="3" height="3" fill="none" stroke="#1414f6" stroke-width="0.9"/><rect x="340.0" y="520.4" width="3" height="3" fill="none" stroke="#1414f6" stroke-width="0.9"/><rect x="369.4" y="547.2" width="3" height="3" fill="none" stroke="#1414f6" stroke-width="0.9"/><rect x="398.7" y="566.5" width="3" height="3" fill="none" stroke="#1414f6" stroke-width="0.9"/><rect x="428.0" y="579.4" width="3" height="3" fill="none" stroke="#1414f6" stroke-width="0.9"/><rect x="457.3" y="575.0" width="3" height="3" fill="none" stroke="#1414f6" stroke-width="0.9"/><rect x="486.7" y="568.4" width="3" height="3" fill="none" stroke="#1414f6" stroke-width="0.9"/><circle cx="77.6" cy="589.0" r="1.6" fill="none" stroke="#1414f6" stroke-width="0.9"/><circle cx="106.9" cy="592.9" r="1.6" fill="none" stroke="#1414f6" stroke-width="0.9"/><circle cx="136.3" cy="589.1" r="1.6" fill="none" stroke="#1414f6" stroke-width="0.9"/><circle cx="165.6" cy="573.2" r="1.6" fill="none" stroke="#1414f6" stroke-width="0.9"/><circle cx="194.9" cy="551.6" r="1.6" fill="none" stroke="#1414f6" stroke-width="0.9"/><circle cx="224.2" cy="528.1" r="1.6" fill="none" stroke="#1414f6" stroke-width="0.9"/><circle cx="253.6" cy="512.6" r="1.6" fill="none" stroke="#1414f6" stroke-width="0.9"/><circle cx="282.9" cy="509.2" r="1.6" fill="none" stroke="#1414f6" stroke-width="0.9"/><circle cx="312.2" cy="522.9" r="1.6" fill="none" stroke="#1414f6" stroke-width="0.9"/><circle cx="341.5" cy="546.6" r="1.6" fill="none" stroke="#1414f6" stroke-width="0.9"/><circle cx="370.9" cy="578.4" r="1.6" fill="none" stroke="#1414f6" stroke-width="0.9"/><circle cx="400.2" cy="592.8" r="1.6" fill="none" stroke="#1414f6" stroke-width="0.9"/><circle cx="429.5" cy="596.6" r="1.6" fill="none" stroke="#1414f6" stroke-width="0.9"/><circle cx="458.8" cy="594.4" r="1.6" fill="none" stroke="#1414f6" stroke-width="0.9"/><circle cx="488.2" cy="590.4" r="1.6" fill="none" stroke="#1414f6" stroke-width="0.9"/><rect x="76.1" y="579.5" width="3" height="3" fill="none" stroke="#1414f6" stroke-width="0.9"/><rect x="105.4" y="586.5" width="3" height="3" fill="none" stroke="#1414f6" stroke-width="0.9"/><rect x="134.8" y="586.9" width="3" height="3" fill="none" stroke="#1414f6" stroke-width="0.9"/><rect x="164.1" y="574.8" width="3" height="3" fill="none" stroke="#1414f6" stroke-width="0.9"/><rect x="193.4" y="552.9" width="3" height="3" fill="none" stroke="#1414f6" stroke-width="0.9"/><rect x="222.7" y="526.5" width="3" height="3" fill="none" stroke="#1414f6" stroke-width="0.9"/><rect x="252.1" y="509.1" width="3" height="3" fill="none" stroke="#1414f6" stroke-width="0.9"/><rect x="281.4" y="502.0" width="3" height="3" fill="none" stroke="#1414f6" stroke-width="0.9"/><rect x="310.7" y="507.3" width="3" height="3" fill="none" stroke="#1414f6" stroke-width="0.9"/><rect x="340.0" y="527.6" width="3" height="3" fill="none" stroke="#1414f6" stroke-width="0.9"/><rect x="369.4" y="556.7" width="3" height="3" fill="none" stroke="#1414f6" stroke-width="0.9"/><rect x="398.7" y="580.0" width="3" height="3" fill="none" stroke="#1414f6" stroke-width="0.9"/><rect x="428.0" y="586.4" width="3" height="3" fill="none" stroke="#1414f6" stroke-width="0.9"/><rect x="457.3" y="585.8" width="3" height="3" fill="none" stroke="#1414f6" stroke-width="0.9"/><rect x="486.7" y="581.7" width="3" height="3" fill="none" stroke="#1414f6" stroke-width="0.9"/><circle cx="77.6" cy="604.0" r="1.6" fill="none" stroke="#1414f6" stroke-width="0.9"/><circle cx="106.9" cy="604.6" r="1.6" fill="none" stroke="#1414f6" stroke-width="0.9"/><circle cx="136.3" cy="604.9" r="1.6" fill="none" stroke="#1414f6" stroke-width="0.9"/><circle cx="165.6" cy="596.1" r="1.6" fill="none" stroke="#1414f6" stroke-width="0.9"/><circle cx="194.9" cy="576.4" r="1.6" fill="none" stroke="#1414f6" stroke-width="0.9"/><circle cx="224.2" cy="551.6" r="1.6" fill="none" stroke="#1414f6" stroke-width="0.9"/><circle cx="253.6" cy="534.3" r="1.6" fill="none" stroke="#1414f6" stroke-width="0.9"/><circle cx="282.9" cy="525.5" r="1.6" fill="none" stroke="#1414f6" stroke-width="0.9"/><circle cx="312.2" cy="529.4" r="1.6" fill="none" stroke="#1414f6" stroke-width="0.9"/><circle cx="341.5" cy="557.3" r="1.6" fill="none" stroke="#1414f6" stroke-width="0.9"/><circle cx="370.9" cy="598.9" r="1.6" fill="none" stroke="#1414f6" stroke-width="0.9"/><circle cx="400.2" cy="610.7" r="1.6" fill="none" stroke="#1414f6" stroke-width="0.9"/><circle cx="429.5" cy="610.4" r="1.6" fill="none" stroke="#1414f6" stroke-width="0.9"/><circle cx="458.8" cy="607.8" r="1.6" fill="none" stroke="#1414f6" stroke-width="0.9"/><circle cx="488.2" cy="603.2" r="1.6" fill="none" stroke="#1414f6" stroke-width="0.9"/><rect x="76.1" y="581.0" width="3" height="3" fill="none" stroke="#1414f6" stroke-width="0.9"/><rect x="105.4" y="584.5" width="3" height="3" fill="none" stroke="#1414f6" stroke-width="0.9"/><rect x="134.8" y="586.1" width="3" height="3" fill="none" stroke="#1414f6" stroke-width="0.9"/><rect x="164.1" y="571.3" width="3" height="3" fill="none" stroke="#1414f6" stroke-width="0.9"/><rect x="193.4" y="543.9" width="3" height="3" fill="none" stroke="#1414f6" stroke-width="0.9"/><rect x="222.7" y="519.0" width="3" height="3" fill="none" stroke="#1414f6" stroke-width="0.9"/><rect x="252.1" y="500.6" width="3" height="3" fill="none" stroke="#1414f6" stroke-width="0.9"/><rect x="281.4" y="496.6" width="3" height="3" fill="none" stroke="#1414f6" stroke-width="0.9"/><rect x="310.7" y="502.7" width="3" height="3" fill="none" stroke="#1414f6" stroke-width="0.9"/><rect x="340.0" y="522.4" width="3" height="3" fill="none" stroke="#1414f6" stroke-width="0.9"/><rect x="369.4" y="547.2" width="3" height="3" fill="none" stroke="#1414f6" stroke-width="0.9"/><rect x="398.7" y="569.1" width="3" height="3" fill="none" stroke="#1414f6" stroke-width="0.9"/><rect x="428.0" y="580.4" width="3" height="3" fill="none" stroke="#1414f6" stroke-width="0.9"/><rect x="457.3" y="580.0" width="3" height="3" fill="none" stroke="#1414f6" stroke-width="0.9"/><rect x="486.7" y="573.1" width="3" height="3" fill="none" stroke="#1414f6" stroke-width="0.9"/><circle cx="77.6" cy="579.7" r="1.6" fill="none" stroke="#1414f6" stroke-width="0.9"/><circle cx="106.9" cy="584.1" r="1.6" fill="none" stroke="#1414f6" stroke-width="0.9"/><circle cx="136.3" cy="570.8" r="1.6" fill="none" stroke="#1414f6" stroke-width="0.9"/><circle cx="165.6" cy="561.6" r="1.6" fill="none" stroke="#1414f6" stroke-width="0.9"/><circle cx="194.9" cy="533.7" r="1.6" fill="none" stroke="#1414f6" stroke-width="0.9"/><circle cx="224.2" cy="510.2" r="1.6" fill="none" stroke="#1414f6" stroke-width="0.9"/><circle cx="253.6" cy="493.9" r="1.6" fill="none" stroke="#1414f6" stroke-width="0.9"/><circle cx="282.9" cy="495.2" r="1.6" fill="none" stroke="#1414f6" stroke-width="0.9"/><circle cx="312.2" cy="508.5" r="1.6" fill="none" stroke="#1414f6" stroke-width="0.9"/><circle cx="341.5" cy="530.7" r="1.6" fill="none" stroke="#1414f6" stroke-width="0.9"/><circle cx="370.9" cy="554.6" r="1.6" fill="none" stroke="#1414f6" stroke-width="0.9"/><circle cx="400.2" cy="571.9" r="1.6" fill="none" stroke="#1414f6" stroke-width="0.9"/><circle cx="429.5" cy="580.9" r="1.6" fill="none" stroke="#1414f6" stroke-width="0.9"/><circle cx="458.8" cy="574.4" r="1.6" fill="none" stroke="#1414f6" stroke-width="0.9"/><circle cx="488.2" cy="565.9" r="1.6" fill="none" stroke="#1414f6" stroke-width="0.9"/><rect x="76.1" y="601.8" width="3" height="3" fill="none" stroke="#1414f6" stroke-width="0.9"/><rect x="105.4" y="602.1" width="3" height="3" fill="none" stroke="#1414f6" stroke-width="0.9"/><rect x="134.8" y="603.4" width="3" height="3" fill="none" stroke="#1414f6" stroke-width="0.9"/><rect x="164.1" y="601.2" width="3" height="3" fill="none" stroke="#1414f6" stroke-width="0.9"/><rect x="193.4" y="587.9" width="3" height="3" fill="none" stroke="#1414f6" stroke-width="0.9"/><rect x="222.7" y="556.9" width="3" height="3" fill="none" stroke="#1414f6" stroke-width="0.9"/><rect x="252.1" y="537.2" width="3" height="3" fill="none" stroke="#1414f6" stroke-width="0.9"/><rect x="281.4" y="520.8" width="3" height="3" fill="none" stroke="#1414f6" stroke-width="0.9"/><rect x="310.7" y="520.6" width="3" height="3" fill="none" stroke="#1414f6" stroke-width="0.9"/><rect x="340.0" y="542.0" width="3" height="3" fill="none" stroke="#1414f6" stroke-width="0.9"/><rect x="369.4" y="578.9" width="3" height="3" fill="none" stroke="#1414f6" stroke-width="0.9"/><rect x="398.7" y="597.6" width="3" height="3" fill="none" stroke="#1414f6" stroke-width="0.9"/><rect x="428.0" y="600.9" width="3" height="3" fill="none" stroke="#1414f6" stroke-width="0.9"/><rect x="457.3" y="601.1" width="3" height="3" fill="none" stroke="#1414f6" stroke-width="0.9"/><rect x="486.7" y="593.2" width="3" height="3" fill="none" stroke="#1414f6" stroke-width="0.9"/><circle cx="77.6" cy="597.4" r="1.6" fill="none" stroke="#1414f6" stroke-width="0.9"/><circle cx="106.9" cy="598.9" r="1.6" fill="none" stroke="#1414f6" stroke-width="0.9"/><circle cx="136.3" cy="597.2" r="1.6" fill="none" stroke="#1414f6" stroke-width="0.9"/><circle cx="165.6" cy="588.4" r="1.6" fill="none" stroke="#1414f6" stroke-width="0.9"/><circle cx="194.9" cy="562.6" r="1.6" fill="none" stroke="#1414f6" stroke-width="0.9"/><circle cx="224.2" cy="537.9" r="1.6" fill="none" stroke="#1414f6" stroke-width="0.9"/><circle cx="253.6" cy="518.2" r="1.6" fill="none" stroke="#1414f6" stroke-width="0.9"/><circle cx="282.9" cy="511.8" r="1.6" fill="none" stroke="#1414f6" stroke-width="0.9"/><circle cx="312.2" cy="524.1" r="1.6" fill="none" stroke="#1414f6" stroke-width="0.9"/><circle cx="341.5" cy="550.9" r="1.6" fill="none" stroke="#1414f6" stroke-width="0.9"/><circle cx="370.9" cy="578.3" r="1.6" fill="none" stroke="#1414f6" stroke-width="0.9"/><circle cx="400.2" cy="592.9" r="1.6" fill="none" stroke="#1414f6" stroke-width="0.9"/><circle cx="429.5" cy="597.5" r="1.6" fill="none" stroke="#1414f6" stroke-width="0.9"/><circle cx="458.8" cy="592.7" r="1.6" fill="none" stroke="#1414f6" stroke-width="0.9"/><circle cx="488.2" cy="587.3" r="1.6" fill="none" stroke="#1414f6" stroke-width="0.9"/><rect x="76.1" y="591.8" width="3" height="3" fill="none" stroke="#1414f6" stroke-width="0.9"/><rect x="105.4" y="595.9" width="3" height="3" fill="none" stroke="#1414f6" stroke-width="0.9"/><rect x="134.8" y="593.7" width="3" height="3" fill="none" stroke="#1414f6" stroke-width="0.9"/><rect x="164.1" y="584.4" width="3" height="3" fill="none" stroke="#1414f6" stroke-width="0.9"/><rect x="193.4" y="566.6" width="3" height="3" fill="none" stroke="#1414f6" stroke-width="0.9"/><rect x="222.7" y="541.0" width="3" height="3" fill="none" stroke="#1414f6" stroke-width="0.9"/><rect x="252.1" y="518.6" width="3" height="3" fill="none" stroke="#1414f6" stroke-width="0.9"/><rect x="281.4" y="510.1" width="3" height="3" fill="none" stroke="#1414f6" stroke-width="0.9"/><rect x="310.7" y="513.7" width="3" height="3" fill="none" stroke="#1414f6" stroke-width="0.9"/><rect x="340.0" y="529.9" width="3" height="3" fill="none" stroke="#1414f6" stroke-width="0.9"/><rect x="369.4" y="561.9" width="3" height="3" fill="none" stroke="#1414f6" stroke-width="0.9"/><rect x="398.7" y="582.5" width="3" height="3" fill="none" stroke="#1414f6" stroke-width="0.9"/><rect x="428.0" y="589.1" width="3" height="3" fill="none" stroke="#1414f6" stroke-width="0.9"/><rect x="457.3" y="588.4" width="3" height="3" fill="none" stroke="#1414f6" stroke-width="0.9"/><rect x="486.7" y="579.6" width="3" height="3" fill="none" stroke="#1414f6" stroke-width="0.9"/><circle cx="77.6" cy="602.0" r="1.6" fill="none" stroke="#1414f6" stroke-width="0.9"/><circle cx="106.9" cy="602.5" r="1.6" fill="none" stroke="#1414f6" stroke-width="0.9"/><circle cx="136.3" cy="600.7" r="1.6" fill="none" stroke="#1414f6" stroke-width="0.9"/><circle cx="165.6" cy="592.7" r="1.6" fill="none" stroke="#1414f6" stroke-width="0.9"/><circle cx="194.9" cy="569.8" r="1.6" fill="none" stroke="#1414f6" stroke-width="0.9"/><circle cx="224.2" cy="543.6" r="1.6" fill="none" stroke="#1414f6" stroke-width="0.9"/><circle cx="253.6" cy="525.3" r="1.6" fill="none" stroke="#1414f6" stroke-width="0.9"/><circle cx="282.9" cy="518.9" r="1.6" fill="none" stroke="#1414f6" stroke-width="0.9"/><circle cx="312.2" cy="525.8" r="1.6" fill="none" stroke="#1414f6" stroke-width="0.9"/><circle cx="341.5" cy="555.8" r="1.6" fill="none" stroke="#1414f6" stroke-width="0.9"/><circle cx="370.9" cy="587.3" r="1.6" fill="none" stroke="#1414f6" stroke-width="0.9"/><circle cx="400.2" cy="599.0" r="1.6" fill="none" stroke="#1414f6" stroke-width="0.9"/><circle cx="429.5" cy="598.8" r="1.6" fill="none" stroke="#1414f6" stroke-width="0.9"/><circle cx="458.8" cy="596.2" r="1.6" fill="none" stroke="#1414f6" stroke-width="0.9"/><circle cx="488.2" cy="589.0" r="1.6" fill="none" stroke="#1414f6" stroke-width="0.9"/><rect x="76.1" y="603.6" width="3" height="3" fill="none" stroke="#1414f6" stroke-width="0.9"/><rect x="105.4" y="603.9" width="3" height="3" fill="none" stroke="#1414f6" stroke-width="0.9"/><rect x="134.8" y="604.9" width="3" height="3" fill="none" stroke="#1414f6" stroke-width="0.9"/><rect x="164.1" y="602.2" width="3" height="3" fill="none" stroke="#1414f6" stroke-width="0.9"/><rect x="193.4" y="588.8" width="3" height="3" fill="none" stroke="#1414f6" stroke-width="0.9"/><rect x="222.7" y="556.9" width="3" height="3" fill="none" stroke="#1414f6" stroke-width="0.9"/><rect x="252.1" y="538.0" width="3" height="3" fill="none" stroke="#1414f6" stroke-width="0.9"/><rect x="281.4" y="524.0" width="3" height="3" fill="none" stroke="#1414f6" stroke-width="0.9"/><rect x="310.7" y="526.0" width="3" height="3" fill="none" stroke="#1414f6" stroke-width="0.9"/><rect x="340.0" y="547.4" width="3" height="3" fill="none" stroke="#1414f6" stroke-width="0.9"/><rect x="369.4" y="586.0" width="3" height="3" fill="none" stroke="#1414f6" stroke-width="0.9"/><rect x="398.7" y="607.5" width="3" height="3" fill="none" stroke="#1414f6" stroke-width="0.9"/><rect x="428.0" y="608.5" width="3" height="3" fill="none" stroke="#1414f6" stroke-width="0.9"/><rect x="457.3" y="606.2" width="3" height="3" fill="none" stroke="#1414f6" stroke-width="0.9"/><rect x="486.7" y="601.1" width="3" height="3" fill="none" stroke="#1414f6" stroke-width="0.9"/><circle cx="77.6" cy="586.0" r="1.6" fill="none" stroke="#1414f6" stroke-width="0.9"/><circle cx="106.9" cy="591.0" r="1.6" fill="none" stroke="#1414f6" stroke-width="0.9"/><circle cx="136.3" cy="587.4" r="1.6" fill="none" stroke="#1414f6" stroke-width="0.9"/><circle cx="165.6" cy="569.6" r="1.6" fill="none" stroke="#1414f6" stroke-width="0.9"/><circle cx="194.9" cy="547.1" r="1.6" fill="none" stroke="#1414f6" stroke-width="0.9"/><circle cx="224.2" cy="522.6" r="1.6" fill="none" stroke="#1414f6" stroke-width="0.9"/><circle cx="253.6" cy="506.9" r="1.6" fill="none" stroke="#1414f6" stroke-width="0.9"/><circle cx="282.9" cy="504.4" r="1.6" fill="none" stroke="#1414f6" stroke-width="0.9"/><circle cx="312.2" cy="518.0" r="1.6" fill="none" stroke="#1414f6" stroke-width="0.9"/><circle cx="341.5" cy="543.2" r="1.6" fill="none" stroke="#1414f6" stroke-width="0.9"/><circle cx="370.9" cy="573.9" r="1.6" fill="none" stroke="#1414f6" stroke-width="0.9"/><circle cx="400.2" cy="589.2" r="1.6" fill="none" stroke="#1414f6" stroke-width="0.9"/><circle cx="429.5" cy="592.9" r="1.6" fill="none" stroke="#1414f6" stroke-width="0.9"/><circle cx="458.8" cy="589.3" r="1.6" fill="none" stroke="#1414f6" stroke-width="0.9"/><circle cx="488.2" cy="584.4" r="1.6" fill="none" stroke="#1414f6" stroke-width="0.9"/><rect x="76.1" y="584.7" width="3" height="3" fill="none" stroke="#1414f6" stroke-width="0.9"/><rect x="105.4" y="589.3" width="3" height="3" fill="none" stroke="#1414f6" stroke-width="0.9"/><rect x="134.8" y="588.9" width="3" height="3" fill="none" stroke="#1414f6" stroke-width="0.9"/><rect x="164.1" y="577.9" width="3" height="3" fill="none" stroke="#1414f6" stroke-width="0.9"/><rect x="193.4" y="560.5" width="3" height="3" fill="none" stroke="#1414f6" stroke-width="0.9"/><rect x="222.7" y="532.3" width="3" height="3" fill="none" stroke="#1414f6" stroke-width="0.9"/><rect x="252.1" y="510.1" width="3" height="3" fill="none" stroke="#1414f6" stroke-width="0.9"/><rect x="281.4" y="502.6" width="3" height="3" fill="none" stroke="#1414f6" stroke-width="0.9"/><rect x="310.7" y="510.3" width="3" height="3" fill="none" stroke="#1414f6" stroke-width="0.9"/><rect x="340.0" y="530.5" width="3" height="3" fill="none" stroke="#1414f6" stroke-width="0.9"/><rect x="369.4" y="559.8" width="3" height="3" fill="none" stroke="#1414f6" stroke-width="0.9"/><rect x="398.7" y="582.6" width="3" height="3" fill="none" stroke="#1414f6" stroke-width="0.9"/><rect x="428.0" y="590.6" width="3" height="3" fill="none" stroke="#1414f6" stroke-width="0.9"/><rect x="457.3" y="589.1" width="3" height="3" fill="none" stroke="#1414f6" stroke-width="0.9"/><rect x="486.7" y="580.2" width="3" height="3" fill="none" stroke="#1414f6" stroke-width="0.9"/><line x1="533" y1="489.5" x2="549.8" y2="489.5" stroke="#222" stroke-width="0.9"/><circle cx="540.5" cy="489.5" r="1.8" fill="#fff" stroke="#222" stroke-width="0.8"/><line x1="533" y1="500.3" x2="550.5" y2="500.3" stroke="#222" stroke-width="0.9" stroke-dasharray="2.2 2.4"/><rect x="538.6" y="498.4" width="3.8" height="3.8" fill="#fff" stroke="#222" stroke-width="0.8"/><path d="M279.6 704.8 L276.6 710.6 H282.6 Z" fill="none" stroke="#1414f6" stroke-width="0.9"/></svg>
<div class="t sf" style="top:477.80px;height:16px;line-height:16px;right:754.70px;transform:scaleX(0.95);transform-origin:right center;font-size:12.4px;color:#111;-webkit-text-stroke:0.2px #111;">10.0</div>
<div class="t sf" style="top:585.20px;height:16px;line-height:16px;right:760.40px;transform:scaleX(0.95);transform-origin:right center;font-size:12.4px;color:#111;-webkit-text-stroke:0.2px #111;">5.0</div>
<div class="t sf" style="top:692.70px;height:16px;line-height:16px;right:760.70px;transform:scaleX(0.95);transform-origin:right center;font-size:12.4px;color:#111;-webkit-text-stroke:0.2px #111;">0.0</div>
<div class="t sf" style="top:710.00px;height:16px;line-height:16px;left:42.00px;transform:scaleX(0.95);transform-origin:left center;font-size:12.4px;color:#111;-webkit-text-stroke:0.2px #111;">−2.4</div>
<div class="t sf" style="top:709.60px;height:16px;line-height:16px;left:83.00px;width:400px;text-align:center;transform:scaleX(0.95);transform-origin:center center;font-size:12.4px;color:#111;-webkit-text-stroke:0.2px #111;">0.0</div>
<div class="t sf" style="top:709.80px;height:16px;line-height:16px;left:510.20px;transform:scaleX(0.95);transform-origin:left center;font-size:12.4px;color:#111;-webkit-text-stroke:0.2px #111;">2.4</div>
<div class="t sf" style="top:722.80px;height:16px;line-height:16px;left:90.00px;width:400px;text-align:center;transform:scaleX(0.95);transform-origin:center center;font-size:12.4px;color:#111;-webkit-text-stroke:0.2px #111;">Focus [µm]</div>
<div class="t sf" style="top:699.00px;height:16px;line-height:16px;left:286.00px;transform:scaleX(0.95);transform-origin:left center;font-size:12.4px;color:#1a1ae0;-webkit-text-stroke:0.2px #1a1ae0;">−0.032(CE)</div>
<div class="t ss" style="top:482.60px;height:12px;line-height:12px;left:523.40px;font-size:11.8px;color:#111;">X</div>
<div class="t ss" style="top:492.90px;height:12px;line-height:12px;left:523.40px;font-size:11.8px;color:#111;">Y</div>
<div class="t mb" style="top:517.60px;height:12px;line-height:12px;left:-192.80px;width:400px;text-align:center;transform:scaleX(1.2);transform-origin:center center;font-size:10px;color:#15100e;">P</div>
<div class="t mb" style="top:528.68px;height:12px;line-height:12px;left:-192.80px;width:400px;text-align:center;transform:scaleX(1.2);transform-origin:center center;font-size:10px;color:#15100e;">a</div>
<div class="t mb" style="top:539.76px;height:12px;line-height:12px;left:-192.80px;width:400px;text-align:center;transform:scaleX(1.2);transform-origin:center center;font-size:10px;color:#15100e;">t</div>
<div class="t mb" style="top:550.84px;height:12px;line-height:12px;left:-192.80px;width:400px;text-align:center;transform:scaleX(1.2);transform-origin:center center;font-size:10px;color:#15100e;">t</div>
<div class="t mb" style="top:561.92px;height:12px;line-height:12px;left:-192.80px;width:400px;text-align:center;transform:scaleX(1.2);transform-origin:center center;font-size:10px;color:#15100e;">e</div>
<div class="t mb" style="top:573.00px;height:12px;line-height:12px;left:-192.80px;width:400px;text-align:center;transform:scaleX(1.2);transform-origin:center center;font-size:10px;color:#15100e;">r</div>
<div class="t mb" style="top:584.08px;height:12px;line-height:12px;left:-192.80px;width:400px;text-align:center;transform:scaleX(1.2);transform-origin:center center;font-size:10px;color:#15100e;">n</div>
<div class="t mb" style="top:604.60px;height:12px;line-height:12px;left:-192.80px;width:400px;text-align:center;transform:scaleX(1.2);transform-origin:center center;font-size:10px;color:#15100e;">L</div>
<div class="t mb" style="top:615.50px;height:12px;line-height:12px;left:-192.80px;width:400px;text-align:center;transform:scaleX(1.2);transform-origin:center center;font-size:10px;color:#15100e;">e</div>
<div class="t mb" style="top:626.40px;height:12px;line-height:12px;left:-192.80px;width:400px;text-align:center;transform:scaleX(1.2);transform-origin:center center;font-size:10px;color:#15100e;">n</div>
<div class="t mb" style="top:637.30px;height:12px;line-height:12px;left:-192.80px;width:400px;text-align:center;transform:scaleX(1.2);transform-origin:center center;font-size:10px;color:#15100e;">g</div>
<div class="t mb" style="top:648.20px;height:12px;line-height:12px;left:-192.80px;width:400px;text-align:center;transform:scaleX(1.2);transform-origin:center center;font-size:10px;color:#15100e;">t</div>
<div class="t mb" style="top:659.10px;height:12px;line-height:12px;left:-192.80px;width:400px;text-align:center;transform:scaleX(1.2);transform-origin:center center;font-size:10px;color:#15100e;">h</div>
<div class="t mb" style="top:671.80px;height:12px;line-height:12px;left:-1.20px;transform:scaleX(1.05);transform-origin:left center;font-size:10px;color:#15100e;">[µm]</div>
<div class="t sf" style="top:610.80px;height:16px;line-height:16px;left:616.00px;transform:scaleX(0.995);transform-origin:left center;font-size:12.4px;color:#1a100c;-webkit-text-stroke:0.38px #1a100c;">Object Wafer</div>
<div class="t sf" style="top:630.60px;height:16px;line-height:16px;left:641.20px;transform:scaleX(1.0);transform-origin:left center;font-size:12.4px;color:#77604f;-webkit-text-stroke:0.25px #77604f;">Total</div>
<div class="t sf" style="top:630.60px;height:16px;line-height:16px;left:722.00px;transform:scaleX(0.99);transform-origin:left center;font-size:12.4px;color:#1a100c;-webkit-text-stroke:0.38px #1a100c;">Each Wafer</div>
<svg class="r" style="left:620px;top:628px;width:110px;height:22px" width="110" height="22"><path d="M7 10.8 L12.3 6 L17.6 10.8" fill="none" stroke="#e6cbb8" stroke-width="1.5"/><path d="M7 10.8 L12.3 15.6 L17.6 10.8" fill="none" stroke="#8c6e5e" stroke-width="1.5"/><path d="M88 9.9 L92.7 5.2 L97.4 9.9 L92.7 14.6 Z" fill="#fb0505"/><path d="M87.2 9.9 L92.7 4.4 L98.2 9.9" fill="none" stroke="#b08f7d" stroke-width="0.9"/><path d="M87.2 9.9 L92.7 15.4 L98.2 9.9" fill="none" stroke="#dcc0ac" stroke-width="0.9"/></svg>
<div class="t sf" style="top:657.60px;height:16px;line-height:16px;left:628.00px;transform:scaleX(0.95);transform-origin:left center;font-size:12.4px;color:#1a100c;-webkit-text-stroke:0.38px #1a100c;">1</div>
<div class="r" style="left:618.5px;top:673px;width:182px;height:10.5px;background:#b3947f;"></div>
<div class="r" style="left:618.5px;top:673px;width:182px;height:1px;background:#96786a;"></div>
<div class="r" style="left:618.5px;top:673px;width:1px;height:10.5px;background:#96786a;"></div>
<div class="r" style="left:620px;top:674.3px;width:19.5px;height:8px;background:#cbab92;border:1px solid;border-color:#e4c8b4 #9a7c6c #9a7c6c #e4c8b4;box-sizing:border-box"></div>
<div class="r" style="left:629.5px;top:675px;width:1px;height:6.5px;background:#a98b7a;"></div>
<div class="t sf" style="top:684.50px;height:16px;line-height:16px;left:619.50px;transform:scaleX(0.95);transform-origin:left center;font-size:12.4px;color:#1a100c;-webkit-text-stroke:0.38px #1a100c;">Wafer No.</div>
<div class="btn" style="left:625px;top:708px;width:54px;height:30.5px;"><div class="bi" style="-webkit-text-stroke:0.3px #6f594d;padding-bottom:0px;font-size:10px;font-weight:normal;color:#6f594d;line-height:11px;">Prev</div></div>
<div class="btn" style="left:735px;top:708px;width:54px;height:30.5px;"><div class="bi" style="-webkit-text-stroke:0.3px #6f594d;padding-bottom:0px;font-size:10px;font-weight:normal;color:#6f594d;line-height:11px;">Next</div></div>
<div class="r" style="left:0px;top:746.5px;width:800px;height:0.9px;background:#b5917d;"></div>
<div class="r" style="left:0px;top:747.4px;width:800px;height:1.5px;background:#8f6b59;"></div>
<div class="r" style="left:0px;top:748.9px;width:800px;height:0.8px;background:#b8947f;"></div>
<div class="btn" style="left:321px;top:755.2px;width:50.4px;height:31.2px;"><div class="bi" style="transform:scaleX(0.93);padding-bottom:1.0px;font-size:10.3px;font-weight:bold;color:#15100e;line-height:11px;">F6<br>Param.</div></div>
<div class="btn" style="left:381.5px;top:755.2px;width:50.4px;height:31.2px;"><div class="bi" style="transform:scaleX(0.93);padding-bottom:1.0px;font-size:10.3px;font-weight:bold;color:#15100e;line-height:11px;">F7<br>List</div></div>
<div class="btn" style="left:441px;top:755.2px;width:50.4px;height:31.2px;"><div class="bi" style="transform:scaleX(0.93);padding-bottom:1.0px;font-size:10.3px;font-weight:bold;color:#15100e;line-height:11px;">F8<br>Summary</div></div>
<div class="btn" style="left:500.8px;top:755.2px;width:50.4px;height:31.2px;"><div class="bi" style="transform:scaleX(0.93);padding-bottom:1.0px;font-size:10.3px;font-weight:bold;color:#15100e;line-height:11px;">F9<br>Display</div></div>
<div class="btn" style="left:561px;top:755.2px;width:50.4px;height:31.2px;"><div class="bi" style="transform:scaleX(0.93);padding-bottom:1.0px;font-size:10.3px;font-weight:bold;color:#15100e;line-height:11px;">F10<br>Map</div></div>
<div class="btn" style="left:752.3px;top:755.2px;width:50.4px;height:31.2px;"><div class="bi" style="transform:scaleX(0.93);padding-bottom:1.0px;font-size:10.3px;font-weight:bold;color:#15100e;line-height:11px;">F14<br>Exit</div></div>
<div class="r" style="left:0px;top:792.2px;width:800px;height:2.6px;background:#dabba3;"></div>
<div class="r" style="left:0px;top:794.8px;width:800px;height:0.8px;background:#d0b099;"></div>
<div class="r" style="left:0px;top:798.7px;width:800px;height:1.3px;background:#a5836f;"></div>
</div></body></html>
